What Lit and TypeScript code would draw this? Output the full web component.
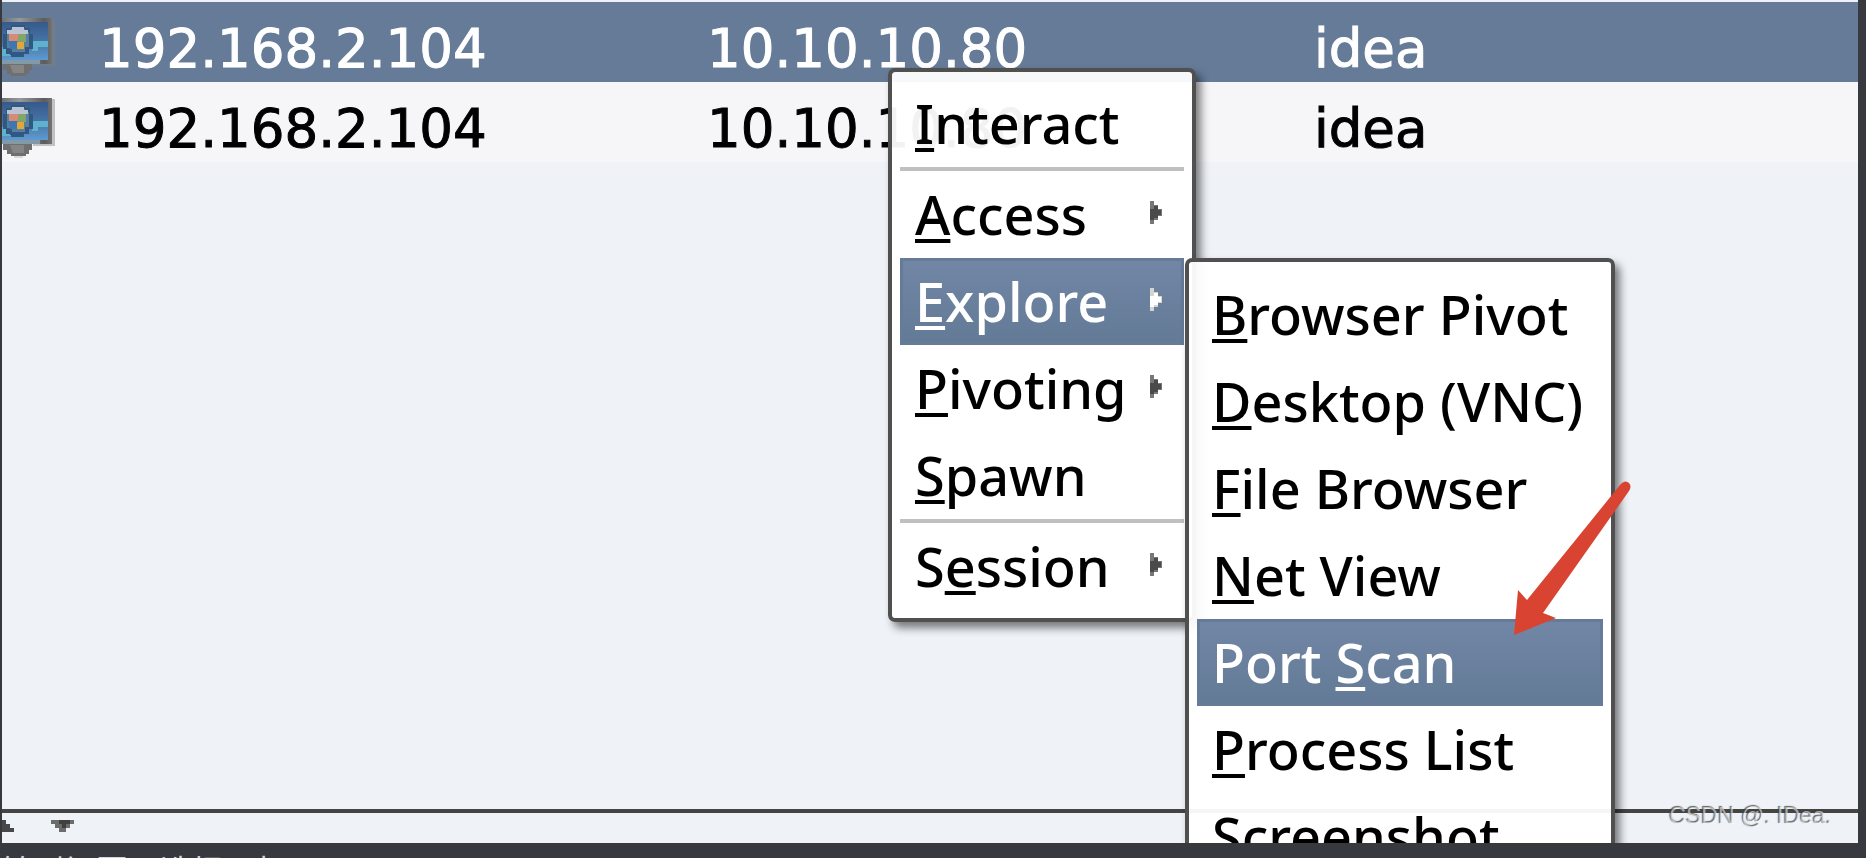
import { LitElement, html, css, svg, nothing } from "lit";
import { customElement, property } from "lit/decorators.js";

interface Entry {
  label: string;
  key: number;
  sub?: boolean;
  active?: boolean;
  separated?: boolean;
}

const mainMenu: Entry[] = [
  { label: "Interact", key: 0 },
  { label: "Access", key: 0, sub: true, separated: true },
  { label: "Explore", key: 0, sub: true, active: true },
  { label: "Pivoting", key: 0, sub: true },
  { label: "Spawn", key: 0 },
  { label: "Session", key: 1, sub: true, separated: true },
];

const exploreMenu: Entry[] = [
  { label: "Browser Pivot", key: 0 },
  { label: "Desktop (VNC)", key: 0 },
  { label: "File Browser", key: 0 },
  { label: "Net View", key: 0 },
  { label: "Port Scan", key: 5, active: true },
  { label: "Process List", key: 0 },
  { label: "Screenshot", key: 0 },
];

const sessions = [
  { external: "192.168.2.104", internal: "10.10.10.80", user: "idea", selected: true },
  { external: "192.168.2.104", internal: "10.10.10.80", user: "idea", selected: false },
];

@customElement("popup-menu")
class PopupMenu extends LitElement {
  @property({ attribute: false }) items: Entry[] = [];

  static styles = css`
    :host {
      display: block;
      box-sizing: border-box;
      padding: 8px;
      border: 4px solid #505050;
      border-radius: 7px;
      background: rgba(255, 255, 255, 0.95);
      background-clip: padding-box;
      box-shadow: 5px 6px 8px rgba(0, 0, 0, 0.5);
    }
    .item {
      display: flex;
      align-items: center;
      justify-content: space-between;
      width: 100%;
      height: 87px;
      padding: 0 22px 0 15px;
      border: 0;
      background: none;
      color: #000;
      font: 500 54px/87px "Noto Sans", "Open Sans", sans-serif;
      text-align: left;
      white-space: pre;
    }
    .active {
      color: #fff;
      background: linear-gradient(#7187a5, #637a97);
      box-shadow: inset 0 0 0 3px #657b98;
    }
    .key {
      text-decoration: underline;
      text-decoration-thickness: 4px;
      text-underline-offset: 4px;
      text-decoration-skip-ink: none;
    }
    .line {
      height: 4px;
      margin: 0;
      border: 0;
      background: #c0c0c0;
    }
    .arrow {
      width: 12px;
      height: 23px;
      margin-bottom: 4px;
    }
  `;

  render() {
    return this.items.map(
      (e) => html`${e.separated ? html`<hr class="line" />` : nothing}<button
          class="item ${e.active ? "active" : ""}"
          role="menuitem"
        ><span>${e.label.slice(0, e.key)}<span class="key">${e.label[e.key]}</span>${e.label.slice(e.key + 1)}</span>${e.sub ? this.arrow(!!e.active) : nothing}</button>`
    );
  }

  arrow(light: boolean) {
    const dark = light ? "#fff" : "#4a4a4a";
    const soft = light ? "#d4d4d0" : "#777";
    return html`<svg class="arrow" viewBox="0 0 12 23" aria-hidden="true">
      <path d="M0 0h4v4h4v4h4v7h-4v4h-4v4h-4z" fill=${soft} />
      <path d="M0 8h4v-3h4v4h3v5h-3v3h-4v2h-4z" fill=${dark} />
    </svg>`;
  }
}

const pc = svg`
  <defs>
    <linearGradient id="screen" x1="0" y1="0" x2="0" y2="1">
      <stop offset="0" stop-color="#37598c" />
      <stop offset="0.55" stop-color="#4777a8" />
      <stop offset="1" stop-color="#5f9ad0" />
    </linearGradient>
    <linearGradient id="frame" x1="0" y1="0" x2="1" y2="0">
      <stop offset="0" stop-color="#6c7278" />
      <stop offset="0.35" stop-color="#959a9c" />
      <stop offset="0.85" stop-color="#5c5c5c" />
      <stop offset="1" stop-color="#747474" />
    </linearGradient>
  </defs>
  <path d="M49 1h4v47h-22v-3h18z" fill="#808080" opacity="0.45" />
  <path d="M1 46h29v6h-3v4h-3v2h-15v-2h-4v-4h-4z" fill="#6f6f6f" />
  <path d="M8 47h14v8h-11z" fill="#858585" />
  <path d="M12 58h9v2h-9z" fill="#808080" opacity="0.25" />
  <path d="M0 0h50v46h-50z" fill="url(#frame)" />
  <path d="M0 4h46v38h-46z" fill="url(#screen)" />
  <path d="M30 23h16v6h-10v4h-6z" fill="#5fb2cd" />
  <path d="M0 29h4v4h6v5h-10z" fill="#5fb2cd" />
  <path d="M0 42h38v4h-38z" fill="#8299a8" />
  <path d="M9 7h14v3h5v6h3v15h-4v5h-5v3h-13v-3h-5v-5h-3v-15h3v-6h5z" fill="#33577f" />
  <path d="M9 11h14v3h4v15h-4v5h-13v-4h-5v-14h4z" fill="#55819f" />
  <path d="M10 9h12v3h4v4h-21v-4h5z" fill="#b9c3d4" />
  <path d="M7 16h9v7h-9z" fill="#d88a73" />
  <path d="M16 16h8v8h-8z" fill="#83a56b" />
  <path d="M6 23h9v8h-7z" fill="#3c77b4" />
  <path d="M15 24h7v7h-7z" fill="#e3a63a" />
  <path d="M8 34h14v3h-14z" fill="#2d5887" />
`;

@customElement("app-root")
class AppRoot extends LitElement {
  static styles = css`
    :host {
      display: flex;
      flex-direction: column;
      box-sizing: border-box;
      height: 100vh;
      padding: 0 8px 0 2px;
      overflow: hidden;
      background: #37393e;
    }
    .panel {
      position: relative;
      flex: 1;
      min-height: 0;
      display: flex;
      flex-direction: column;
      overflow: hidden;
      background: #eff3f8;
    }
    .list {
      flex: 1;
      min-height: 0;
      border-top: 2px solid #f0f1f6;
    }
    table {
      width: 100%;
      table-layout: fixed;
      border-collapse: collapse;
      font: 53px/66px "DejaVu Sans", sans-serif;
      color: #000;
    }
    .pic {
      width: 97px;
    }
    .external {
      width: 608px;
    }
    .internal {
      width: 607px;
    }
    tr {
      background: #f6f6f9;
    }
    .selected {
      background: #657b98;
      color: #fff;
    }
    td {
      height: 66px;
      padding: 14px 0 0;
      text-align: left;
      vertical-align: top;
      -webkit-text-stroke: 1px currentColor;
    }
    .pc {
      display: block;
      width: 54px;
      height: 60px;
      margin-top: 2px;
    }
    .splitter {
      display: flex;
      gap: 37px;
      height: 23px;
      padding-top: 7px;
      border-top: 4px solid #434543;
    }
    .toggle {
      display: block;
      padding: 0;
      border: 0;
      background: none;
      height: 12px;
      line-height: 0;
    }
    .main {
      position: absolute;
      left: 886px;
      top: 68px;
      width: 308px;
    }
    .explore {
      position: absolute;
      left: 1183px;
      top: 258px;
      width: 430px;
      padding-top: 9px;
    }
    .pointer {
      position: absolute;
      left: 1510px;
      top: 478px;
      width: 124px;
      height: 162px;
    }
    .mark {
      position: absolute;
      right: 26px;
      bottom: 14px;
      font: 23px/26px "Liberation Sans", sans-serif;
      color: rgba(255, 255, 255, 0.55);
      text-shadow: -1px -1px 1px rgba(60, 60, 60, 0.8);
    }
    .caption {
      height: 15px;
      margin: 0 0 0 -2px;
      overflow: hidden;
      font: 32px/52px "Noto Sans CJK SC", sans-serif;
      color: #d3d5da;
      white-space: nowrap;
    }
  `;

  render() {
    return html`
      <main class="panel">
        <div class="list">
          <table aria-label="Sessions">
            <colgroup>
              <col class="pic" />
              <col class="external" />
              <col class="internal" />
              <col />
            </colgroup>
            <tbody>
              ${sessions.map(
                (s) => html`<tr class=${s.selected ? "selected" : ""}>
                  <td><svg class="pc" viewBox="0 0 54 60" aria-hidden="true">${pc}</svg></td>
                  <td>${s.external}</td>
                  <td>${s.internal}</td>
                  <td>${s.user}</td>
                </tr>`
              )}
            </tbody>
          </table>
        </div>
        <div class="splitter">
          <button class="toggle" aria-label="Collapse">
            <svg width="12" height="12" viewBox="0 0 12 12">
              <path d="M0 0h4v4h4v4h4v4h-12z" fill="#484848" />
            </svg>
          </button>
          <button class="toggle" aria-label="Expand">
            <svg width="23" height="12" viewBox="0 0 23 12">
              <path d="M0 0h23v4h-4v4h-4v4h-7v-4h-4v-4h-4z" fill="#6c6c6c" />
              <path d="M8 0h11v4h-4v4h-4v-4h-3z" fill="#404040" />
            </svg>
          </button>
        </div>
        <popup-menu class="main" role="menu" aria-label="Session actions" .items=${mainMenu}></popup-menu>
        <popup-menu class="explore" role="menu" aria-label="Explore" .items=${exploreMenu}></popup-menu>
        <svg class="pointer" viewBox="0 0 124 162" aria-hidden="true">
          <path
            d="M2 157L6 112L15 122L108 7Q113 1 117 5Q120 8 117 13L31 135L44 140Z"
            fill="#d94432"
          />
        </svg>
        <span class="mark">CSDN @. IDea.</span>
      </main>
      <p class="caption">转到视图，选择目标</p>
    `;
  }
}
